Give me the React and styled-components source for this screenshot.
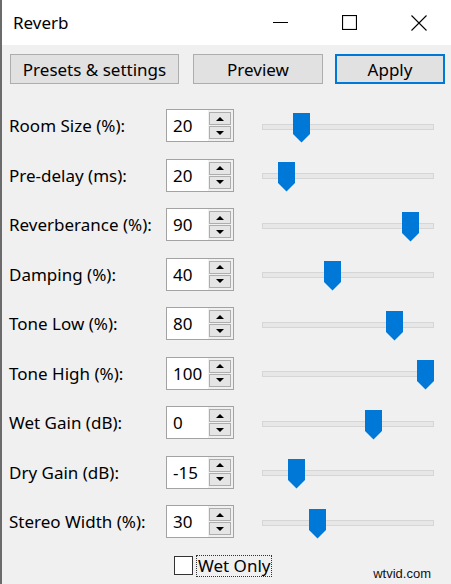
import React from 'react';
import styled, { createGlobalStyle } from 'styled-components';

const GlobalStyle = createGlobalStyle`
  html, body {
    margin: 0;
    padding: 0;
    background: #f0f0f0;
  }
  * {
    box-sizing: border-box;
  }
`;

const FONT = `"Noto Sans", "Open Sans", "Liberation Sans", sans-serif`;

const Window = styled.div`
  position: relative;
  width: 451px;
  height: 584px;
  overflow: hidden;
  background: #f0f0f0;
  border-left: 2px solid #6b6b6b;
  font-family: ${FONT};
  color: #000;
`;

const TitleBar = styled.div`
  display: flex;
  align-items: center;
  height: 45px;
  padding-left: 11px;
  background: #fff;
`;

const Title = styled.span`
  flex: 1;
  font-size: 17px;
`;

const WinButtons = styled.div`
  display: flex;
  margin-right: -2px;
`;

const WinButton = styled.div`
  display: flex;
  align-items: center;
  justify-content: center;
  width: 69px;
  height: 45px;
`;

const Toolbar = styled.div`
  display: flex;
  padding: 9px 0 0 8px;
`;

const Button = styled.button`
  width: ${(p) => p.$w}px;
  height: 30px;
  margin-right: ${(p) => p.$gap || 0}px;
  padding: 0;
  background: #e1e1e1;
  border: ${(p) => (p.$primary ? '2px solid #0078d7' : '1px solid #adadad')};
  font-family: ${FONT};
  font-size: 17px;
  color: #000;
`;

const Params = styled.div`
  display: grid;
  grid-template-columns: 157px 68px 172px;
  grid-auto-rows: 49.5px;
  align-items: center;
  margin-top: 17px;
  padding-left: 7px;
`;

const Label = styled.span`
  font-size: 17px;
  white-space: nowrap;
`;

const SpinBox = styled.div`
  display: flex;
  height: 33px;
  background: #fff;
  border: 1px solid #a3a3a3;
`;

const SpinValue = styled.span`
  flex: 1;
  display: flex;
  align-items: center;
  padding-left: 6px;
  font-size: 17px;
`;

const SpinButtons = styled.div`
  display: flex;
  flex-direction: column;
  gap: 1px;
  width: 25px;
  padding: 2px 2px 2px 1px;
  background: #f0f0f0;
`;

const SpinButton = styled.div`
  flex: 1;
  display: flex;
  align-items: center;
  justify-content: center;
  background: #e5e5e5;
  border: 1px solid #adadad;
`;

const Arrow = styled.span`
  width: 0;
  height: 0;
  border-left: 4px solid transparent;
  border-right: 4px solid transparent;
  ${(p) => (p.$down ? 'border-top: 4px solid #000;' : 'border-bottom: 4px solid #000;')}
`;

const Slider = styled.div`
  position: relative;
  height: 34px;
  margin-left: 28px;
  width: 172px;
`;

const Track = styled.div`
  margin-top: 15px;
  height: 6px;
  background: #e7e7e7;
  border: 1px solid #d6d6d6;
`;

const Thumb = styled.svg`
  position: absolute;
  top: 4px;
`;

const CheckRow = styled.div`
  display: flex;
  align-items: center;
  gap: 3px;
  margin-top: 8px;
  padding-left: 172px;
`;

const CheckBox = styled.span`
  width: 19px;
  height: 19px;
  background: #fff;
  border: 1px solid #333;
`;

const CheckLabel = styled.span`
  padding: 0 1px;
  font-size: 17px;
  line-height: 20px;
  border: 1px dotted #333;
`;

const Watermark = styled.span`
  position: absolute;
  right: 20px;
  bottom: 3px;
  font-family: "Liberation Sans", Arial, sans-serif;
  font-size: 13px;
  color: #111;
`;

// pct = where the thumb sits along the track (value mapped onto the slider range)
const params = [
  { label: 'Room Size (%):', value: '20', pct: 20 },
  { label: 'Pre-delay (ms):', value: '20', pct: 10 },
  { label: 'Reverberance (%):', value: '90', pct: 90 },
  { label: 'Damping (%):', value: '40', pct: 40 },
  { label: 'Tone Low (%):', value: '80', pct: 80 },
  { label: 'Tone High (%):', value: '100', pct: 100 },
  { label: 'Wet Gain (dB):', value: '0', pct: 66.7 },
  { label: 'Dry Gain (dB):', value: '-15', pct: 16.7 },
  { label: 'Stereo Width (%):', value: '30', pct: 30 },
];

function ThumbIcon({ pct }) {
  return (
    <Thumb width="17" height="30" viewBox="0 0 17 30" style={{ left: `${(pct * 155) / 100}px` }}>
      <path d="M0 0 H17 V21 L8.5 29.5 L0 21 Z" fill="#0078d7" />
    </Thumb>
  );
}

export default function App() {
  return (
    <>
      <GlobalStyle />
      <Window>
        <TitleBar>
          <Title>Reverb</Title>
          <WinButtons>
            <WinButton>
              <svg width="15" height="15" viewBox="0 0 15 15">
                <path d="M0 7.5 H15" stroke="#000" strokeWidth="1" />
              </svg>
            </WinButton>
            <WinButton>
              <svg width="15" height="15" viewBox="0 0 15 15">
                <rect x="0.5" y="0.5" width="14" height="14" fill="none" stroke="#000" strokeWidth="1.2" />
              </svg>
            </WinButton>
            <WinButton>
              <svg width="16" height="16" viewBox="0 0 16 16">
                <path d="M0.5 0.5 L15.5 15.5 M15.5 0.5 L0.5 15.5" stroke="#000" strokeWidth="1.1" />
              </svg>
            </WinButton>
          </WinButtons>
        </TitleBar>

        <Toolbar>
          <Button $w={169} $gap={14}>Presets &amp; settings</Button>
          <Button $w={130} $gap={12}>Preview</Button>
          <Button $w={110} $primary>Apply</Button>
        </Toolbar>

        <Params>
          {params.map((p) => (
            <React.Fragment key={p.label}>
              <Label>{p.label}</Label>
              <SpinBox>
                <SpinValue>{p.value}</SpinValue>
                <SpinButtons>
                  <SpinButton><Arrow /></SpinButton>
                  <SpinButton><Arrow $down /></SpinButton>
                </SpinButtons>
              </SpinBox>
              <Slider>
                <Track />
                <ThumbIcon pct={p.pct} />
              </Slider>
            </React.Fragment>
          ))}
        </Params>

        <CheckRow>
          <CheckBox />
          <CheckLabel>Wet Only</CheckLabel>
        </CheckRow>

        <Watermark>wtvid.com</Watermark>
      </Window>
    </>
  );
}
